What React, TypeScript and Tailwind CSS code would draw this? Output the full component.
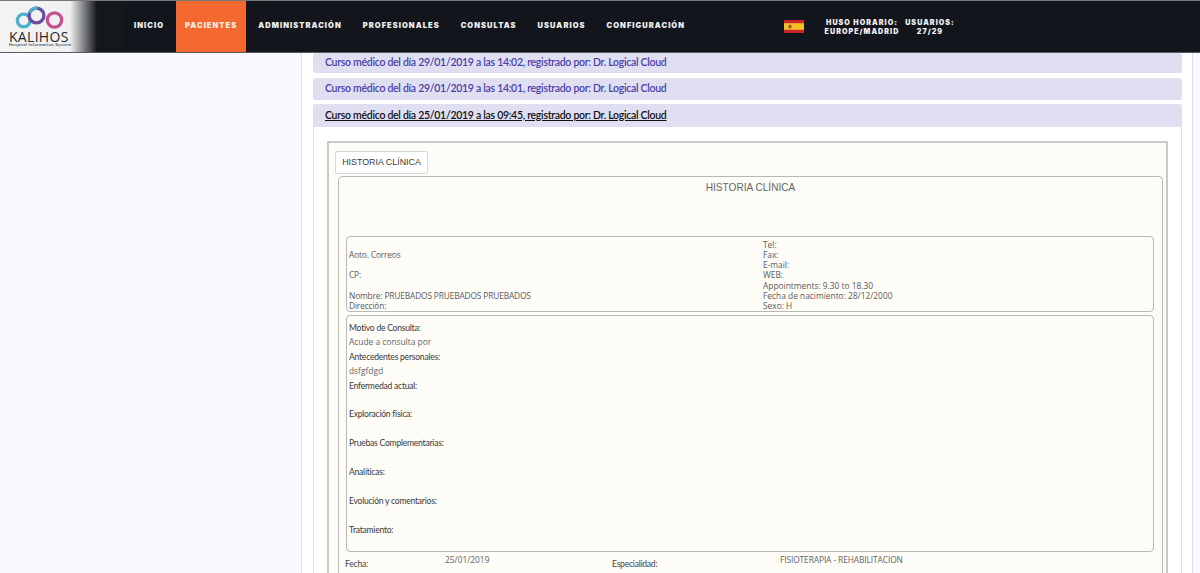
import React from "react";

const navItems = ["INICIO", "PACIENTES", "ADMINISTRACIÓN", "PROFESIONALES", "CONSULTAS", "USUARIOS", "CONFIGURACIÓN"];

const cursos = [
  { label: "Curso médico del día 29/01/2019 a las 14:02, registrado por: Dr. Logical Cloud", box: "h-[19px] pt-[1px]", wrap: "mb-[5px]", open: false },
  { label: "Curso médico del día 29/01/2019 a las 14:01, registrado por: Dr. Logical Cloud", box: "h-[21px] rounded-t-[3px] pt-[1px]", wrap: "mb-[4px]", open: false },
  { label: "Curso médico del día 25/01/2019 a las 09:45, registrado por: Dr. Logical Cloud", box: "h-[23px] rounded-t-[3px]", wrap: "", open: true },
];

const campos = [
  { label: "Motivo de Consulta:", value: "Acude a consulta por" },
  { label: "Antecedentes personales:", value: "dsfgfdgd" },
  { label: "Enfermedad actual:", value: "" },
  { label: "Exploración física:", value: "" },
  { label: "Pruebas Complementarias:", value: "" },
  { label: "Analíticas:", value: "" },
  { label: "Evolución y comentarios:", value: "" },
  { label: "Tratamiento:", value: "" },
];

const datosIzq = ["", "Aoto. Correos", "", "CP:", "", "Nombre: PRUEBADOS PRUEBADOS PRUEBADOS", "Dirección:"];
const datosDer = ["Tel:", "Fax:", "E-mail:", "WEB:", "Appointments: 9.30 to 18.30", "Fecha de nacimiento: 28/12/2000", "Sexo: H"];

const Logo = () => (
  <div className="flex h-full w-[125px] shrink-0 flex-col bg-[linear-gradient(90deg,#f4f4f4_0px,#f0f0f0_70px,#14171c_97px)] pl-[9px]">
    <svg width="52" height="25" viewBox="0 0 52 25" className="mt-[5px] ml-[5px] shrink-0">
      <circle cx="9.7" cy="14.5" r="6.4" fill="none" stroke="#4fb1cd" strokeWidth="3.3" />
      <circle cx="40.5" cy="14" r="7.2" fill="none" stroke="#c4518f" strokeWidth="3.3" />
      <circle cx="22.5" cy="9.5" r="7.4" fill="none" stroke="#6b4c9f" strokeWidth="3.3" />
      <path d="M15.5 7 A7.4 7.4 0 0 1 23.5 2.2" fill="none" stroke="#4fb1cd" strokeWidth="3.3" />
    </svg>
    <div className="mt-[-1px] font-['Open_Sans',sans-serif] text-[14px] leading-[13px] tracking-[0.3px] text-[#2a2a2e]">KALIHOS</div>
    <div className="font-['Liberation_Sans',sans-serif] text-[4px] leading-[4px] font-bold tracking-[0.3px] text-[#55555a]">Hospital Information System</div>
  </div>
);

const SpainFlag = () => (
  <svg width="20" height="13" viewBox="0 0 20 13" className="shrink-0">
    <rect width="20" height="13" fill="#c8242c" />
    <rect y="3.2" width="20" height="6.6" fill="#f5c225" />
    <rect x="4.5" y="4.8" width="3" height="3.6" rx="0.8" fill="#a5552f" />
  </svg>
);

const Header = () => (
  <header className="flex h-[53px] shrink-0 items-stretch border-t border-b border-t-[#77787a] border-b-[#5a5b5e] bg-[#12161c] font-['Inter',sans-serif] text-[#f1f1f1]">
    <Logo />
    <nav className="flex w-[659px] shrink-0 items-stretch gap-[3px]">
      {navItems.map((item) => (
        <a
          key={item}
          className={
            "flex items-center px-[9px] pb-[1px] text-[7.5px] font-black tracking-[1.05px] " +
            (item === "PACIENTES" ? "bg-[#f2682f] text-[#fdf0e6]" : "")
          }
        >
          {item}
        </a>
      ))}
    </nav>
    <div className="flex items-center">
      <SpainFlag />
      <div className="ml-[5px] w-[106px] text-center text-[7.1px] leading-[9px] font-black tracking-[1.05px]">
        <div>HUSO HORARIO:</div>
        <div>EUROPE/MADRID</div>
      </div>
      <div className="ml-[-14px] w-[58px] text-center text-[7.1px] leading-[9px] font-black tracking-[1.05px]">
        <div>USUARIOS:</div>
        <div>27/29</div>
      </div>
    </div>
  </header>
);

const HistoriaClinica = () => (
  <div className="mx-[13px] mt-[14px] h-[500px] border-2 border-b-0 border-[#c9c9c5] bg-[#fdfcf7] pt-[8px] pl-[6px] pr-[3px]">
    <button className="block h-[23px] w-[93px] rounded-[2px] border border-[#d8d8d8] bg-white font-['Liberation_Sans',sans-serif] text-[8.9px] text-[#3a3a3a]">
      HISTORIA CLÍNICA
    </button>
    <div className="ml-[3px] mt-[2px] rounded-t-[5px] border border-b-0 border-[#b8b8b4] pb-[1px]">
      <h2 className="pt-[4px] pb-[42px] text-center font-['Liberation_Sans',sans-serif] text-[10.1px] leading-[13px] font-normal text-[#666]">
        HISTORIA CLÍNICA
      </h2>
      <div className="ml-[7px] mr-[8px] grid h-[76px] grid-cols-[414px_1fr] rounded-[4px] border border-[#b8b8b4] px-[2px] pt-[3px] font-['Open_Sans',sans-serif] text-[8.4px] leading-[10.17px] text-[#5b5b5b]">
        <div className="tracking-[-0.16px]">
          {datosIzq.map((linea, i) => (
            <div key={i} className="h-[10.17px] whitespace-nowrap">{linea}</div>
          ))}
        </div>
        <div>
          {datosDer.map((linea) => (
            <div key={linea} className="h-[10.17px] whitespace-nowrap">{linea}</div>
          ))}
        </div>
      </div>
      <div className="ml-[7px] mr-[8px] mt-[3px] h-[237px] rounded-[4px] border border-[#b8b8b4] px-[2px] pt-[5px]">
        {campos.map((c) => (
          <div key={c.label} className="h-[28.8px]">
            <div className="h-[14.4px] font-['Lato',sans-serif] text-[8.6px] leading-[14.4px] tracking-[-0.25px] text-[#3a3a3a]">{c.label}</div>
            <div className="h-[14.4px] font-['Open_Sans',sans-serif] text-[8.4px] leading-[14.4px] text-[#666]">{c.value}</div>
          </div>
        ))}
      </div>
      <div className="ml-[6px] grid h-[20px] grid-cols-[100px_167px_168px_1fr] pt-[1px] text-[#444]">
        <span className="pt-[4px] font-['Lato',sans-serif] text-[8.6px] leading-[14px] tracking-[-0.25px]">Fecha:</span>
        <span className="font-['Open_Sans',sans-serif] text-[8.4px] leading-[14px] text-[#666]">25/01/2019</span>
        <span className="pt-[4px] font-['Lato',sans-serif] text-[8.6px] leading-[14px] tracking-[-0.25px]">Especialidad:</span>
        <span className="font-['Open_Sans',sans-serif] text-[8.4px] leading-[14px] tracking-[-0.1px] text-[#666]">FISIOTERAPIA - REHABILITACION</span>
      </div>
    </div>
  </div>
);

export default function App() {
  return (
    <div className="flex h-[573px] w-[1200px] flex-col overflow-hidden bg-[#f9faff]">
      <Header />
      <div className="flex min-h-0 flex-1">
        <aside className="w-[301px] shrink-0" />
        <main className="w-[892px] shrink-0 border-x border-[#dcdcf3] bg-white pl-[11px] pr-[10px]">
          {cursos.map((curso) => (
            <div
              key={curso.label}
              className={curso.open ? "border-x border-[#dcdcf3]" : curso.wrap + " rounded-[3px] border-x border-b border-[#dcdcf3]"}
            >
              <div
                className={
                  curso.box +
                  " flex items-center bg-[#e0dff1] pl-[11px] font-['Lato',sans-serif] text-[10.5px] font-semibold tracking-[-0.29px] " +
                  (curso.open ? "text-[#111] underline" : "text-[#4b40a6]")
                }
              >
                {curso.label}
              </div>
              {curso.open && <HistoriaClinica />}
            </div>
          ))}
        </main>
      </div>
    </div>
  );
}
